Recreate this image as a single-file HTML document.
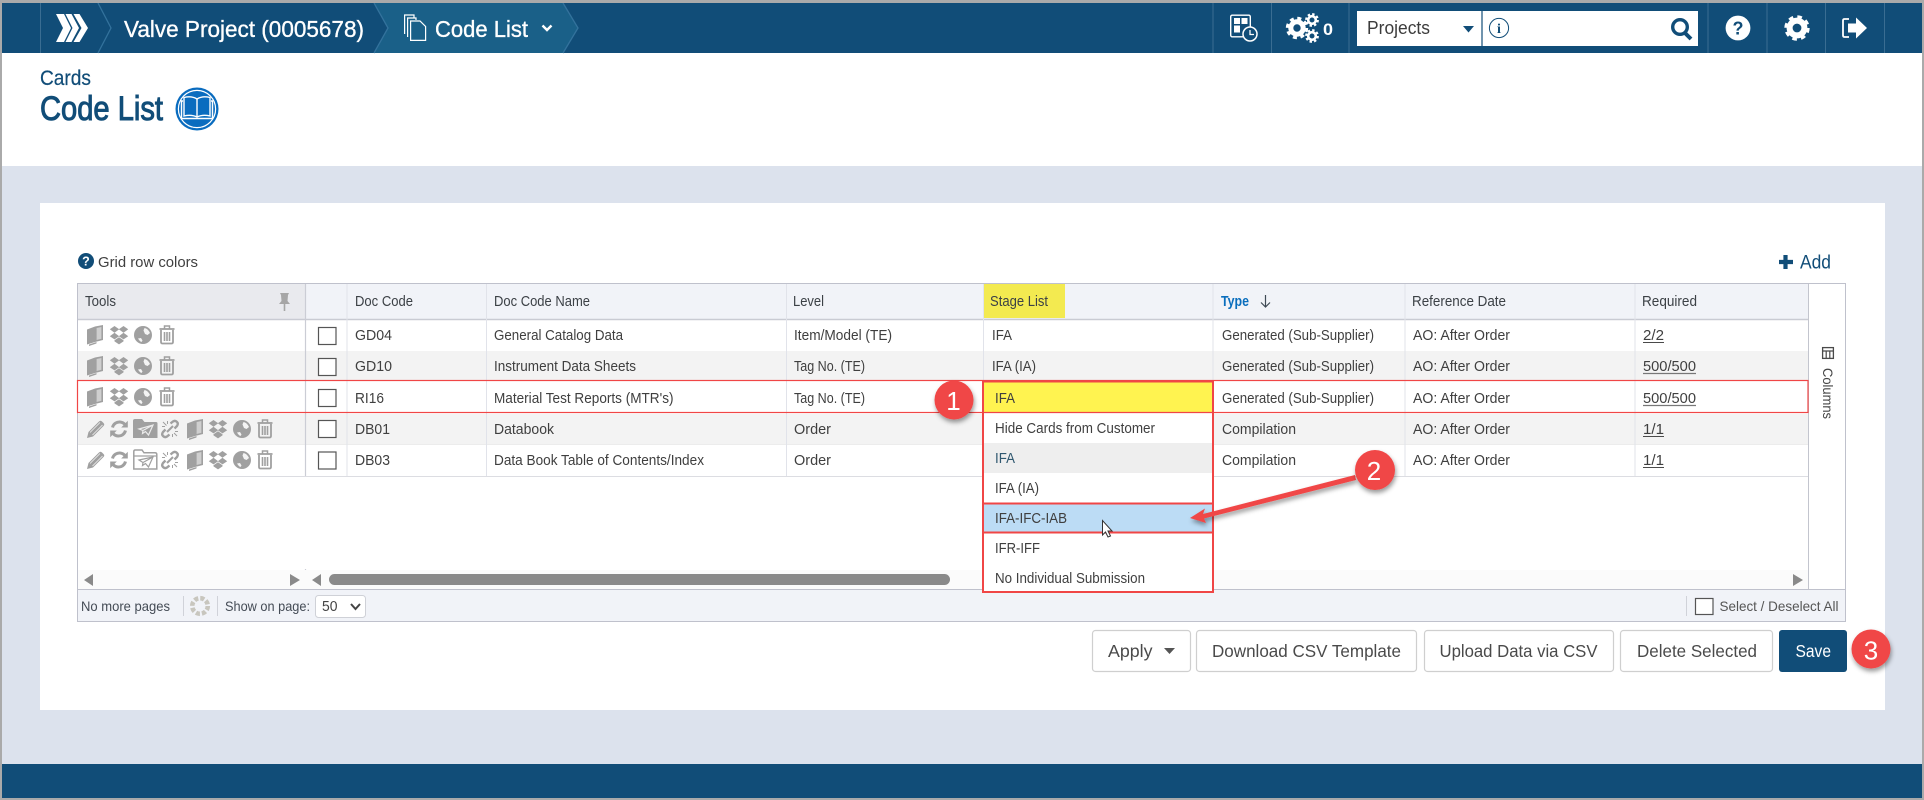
<!DOCTYPE html>
<html lang="en">
<head>
<meta charset="utf-8">
<title>Code List</title>
<style>
html,body{margin:0;padding:0;width:1924px;height:800px;overflow:hidden;background:#dce2ed}
svg{display:block;position:absolute;left:0;top:0}
text{font-family:"Liberation Sans",sans-serif;white-space:pre}
.c{font-size:14.5px;fill:#3f3f3f}
.h{font-size:14.5px;fill:#3c4146}
.w{fill:#fff}
.b{font-size:17.5px;fill:#4a4a4a}
.f{font-size:14px;fill:#444b55}
</style>
</head>
<body>
<svg width="1924" height="800" viewBox="0 0 1924 800" xmlns="http://www.w3.org/2000/svg">
<defs>
  <g id="book"><path d="M0 4.5 L8 1.5 V17 L0 19.5Z" fill="#a0a0a0"/><path d="M8 1.5 L16 0 V15 L8 17Z" fill="#a0a0a0"/><path d="M9.6 3 L14.4 2 V13.7 L9.6 15Z" fill="#cfcfcf"/><path d="M2 19.5 L9.5 17 V18.5 L2 21Z" fill="#a0a0a0"/></g>
  <g id="drop" fill="#a0a0a0"><path d="M4.5 0 L9.2 3.3 L4.5 6.8 L-.2 3.3Z"/><path d="M13.5 0 L18.2 3.3 L13.5 6.8 L8.8 3.3Z"/><path d="M4.5 6.8 L9.2 10.2 L4.5 13.4 L-.2 10.2Z"/><path d="M13.5 6.8 L18.2 10.2 L13.5 13.4 L8.8 10.2Z"/><path d="M4.5 14.2 L9 11.2 L13.5 14.2 V15.4 L9 18.4 L4.5 15.4Z"/></g>
  <g id="globe"><circle cx="9" cy="9" r="9" fill="#a0a0a0"/><path d="M10.5 2 C13 2.5 15 4.5 16 7 L13.5 9 L11 8 L9.5 4.5Z M4 12.5 L7 12 L8.5 14.5 L7.5 16 C6 15.5 5 14 4 12.5Z" fill="#f4f4f4"/></g>
  <g id="trash" fill="none" stroke="#a0a0a0"><path d="M0.5 4 H15.5" stroke-width="1.8"/><path d="M5.5 3.5 V1 H10.5 V3.5" stroke-width="1.5"/><path d="M2 5 V17 C2 18 2.6 18.5 3.5 18.5 H12.5 C13.4 18.5 14 18 14 17 V5" stroke-width="1.8"/><path d="M5.5 7 V16 M8 7 V16 M10.5 7 V16" stroke-width="1.6"/></g>
  <g id="pencil" fill="#a0a0a0"><path d="M0 18 L1.5 12 L12 1.5 C13 .5 14 .5 15 1.5 L16.5 3 C17.5 4 17.5 5 16.5 6 L6 16.5Z"/><path d="M3 12.5 L13 2.5 M5.5 15 L15.5 5" stroke="#fff" stroke-width=".6"/></g>
  <g id="sync" fill="none" stroke="#a0a0a0" stroke-width="3"><path d="M2.5 7.5 C3.5 3.5 7 1.8 10 2 C12.5 2.2 14 3.2 15.5 5"/><path d="M15.5 10.5 C14.5 14.5 11 16.2 8 16 C5.5 15.8 4 14.8 2.5 13"/><path d="M17.8 .8 V7.5 H11.2Z M.2 17.2 V10.5 H6.8Z" fill="#a0a0a0" stroke="none"/></g>
  <g id="link" fill="none" stroke="#a0a0a0"><path d="M9.5 3.5 L12 1.5 C13.5 .5 15 1 16 2 C17 3 17 4.5 16 6 L13.5 8.5" stroke-width="2.4"/><path d="M8.5 14.5 L6 16.5 C4.5 17.5 3 17 2 16 C1 15 1 13.5 2 12 L4.5 9.5" stroke-width="2.4"/><path d="M6 12 L12 6" stroke-width="2"/><path d="M2 2 L5.5 5.5 M1 6.5 H4 M6.5 1 V4 M16 16 L13 13 M17 11.5 H14 M11.5 17 V14" stroke-width="1"/></g>
  <g id="sendfill"><path d="M0 3 C0 1.5 .7 1 2 1 H9 L11.5 4 H23 C24 4 24.5 4.6 24.5 5.5 V20 H0Z" fill="#a0a0a0"/><path d="M6 11 L20 7 L15.5 17 L12.5 13.5 L9.5 15.5 L10 12.5Z M10 12.5 L20 7" fill="none" stroke="#ececec" stroke-width="1.2"/></g>
  <g id="sendline" fill="none" stroke="#a0a0a0"><path d="M.8 20 V2.5 C.8 1.5 1.2 1 2.2 1 H9 L11 3.8 H22 C23.3 3.8 23.8 4.4 23.8 5.5 V20Z" stroke-width="1.5"/><path d="M.8 7 H23.8" stroke-width="1.2"/><path d="M6 11 L20 8 L15.5 18 L12.5 14.5 L9.5 16.5 L10 13.5Z M10 13.5 L20 8" stroke-width="1.2"/></g>
  <g id="tools3"><use href="#book" x="87" y="-10"/><use href="#drop" x="110" y="-9"/><use href="#globe" x="134" y="-9"/><use href="#trash" x="159" y="-10"/></g>
  <g id="toolsEnd"><use href="#pencil" x="87" y="-9"/><use href="#sync" x="110" y="-9"/><use href="#link" x="161" y="-9"/><use href="#book" x="187" y="-10"/><use href="#drop" x="209" y="-9"/><use href="#globe" x="233" y="-9"/><use href="#trash" x="257" y="-10"/></g>
  <rect id="cb" width="17.5" height="17" fill="#fff" stroke="#555" stroke-width="1.2"/>
  <filter id="sh" x="-40%" y="-40%" width="180%" height="180%"><feDropShadow dx="1" dy="3" stdDeviation="2.5" flood-color="#000" flood-opacity=".4"/></filter>
</defs>

<!-- frame -->
<rect width="1924" height="800" fill="#dce2ed"/>
<rect x="2" y="53" width="1920" height="113" fill="#fff"/>

<!-- navbar -->
<rect x="2" y="3" width="1920" height="50" fill="#114d78"/>
<path d="M374 3 H563 L578 28 L563 53 H374 L388 28Z" fill="#1a6088"/>
<path d="M40.5 3 V53" stroke="#3a6d92"/>
<path d="M98 3 L111 28 L98 53 M374 3 L388 28 L374 53 M563 3 L578 28 L563 53" fill="none" stroke="#33729c" stroke-width="1.3"/>
<g fill="#fff"><path d="M56 14 H64 L71 28 L64 42 H56 L63 28Z"/><path d="M65.5 14 H71.5 L79 28 L71.5 42 H65.5 L72.5 28Z"/><path d="M73.5 14 H79.5 L88 28 L79.5 42 H73.5 L81.5 28Z"/></g>
<text x="124" y="37" font-size="23.5" class="w" stroke="#fff" stroke-width=".35" textLength="240" lengthAdjust="spacingAndGlyphs">Valve Project (0005678)</text>
<g fill="none" stroke="#fff" stroke-width="1.2"><path d="M404.6 34 V15 H414 V18"/><path d="M407.6 37 V18 H416 V20"/><path d="M410.6 40.4 V21 H420 L425.6 26.5 V40.4Z"/></g>
<text x="435" y="37" font-size="23.5" class="w" stroke="#fff" stroke-width=".35" textLength="93" lengthAdjust="spacingAndGlyphs">Code List</text>
<path d="M542.5 25.5 L547 30 L551.5 25.5" fill="none" stroke="#fff" stroke-width="2.4"/>

<path d="M1213 3 V53 M1271.5 3 V53 M1349 3 V53 M1708 3 V53 M1767 3 V53 M1825.5 3 V53 M1884.5 3 V53" stroke="#3a6d92"/>
<!-- schedule icon -->
<g fill="none" stroke="#fff"><rect x="1230.7" y="15.2" width="19.6" height="21.6" rx="1.5" stroke-width="1.4"/></g>
<g fill="#fff"><rect x="1234" y="18" width="6" height="6"/><rect x="1241.5" y="18" width="6" height="6"/><rect x="1234" y="25.5" width="6" height="7"/></g>
<circle cx="1250" cy="34" r="7" fill="#114d78" stroke="#fff" stroke-width="1.5"/>
<path d="M1250 30 V34.5 H1254" fill="none" stroke="#fff" stroke-width="1.3"/>
<!-- gears -->
<g fill="none" stroke="#fff">
  <circle cx="1297" cy="28" r="6.2" stroke-width="5"/><circle cx="1297" cy="28" r="9.7" stroke-width="3" stroke-dasharray="4 3.62"/>
  <circle cx="1312" cy="20" r="3.8" stroke-width="2.6"/><circle cx="1312" cy="20" r="5.8" stroke-width="2.2" stroke-dasharray="2.4 2.15"/>
  <circle cx="1312" cy="36" r="3.8" stroke-width="2.6"/><circle cx="1312" cy="36" r="5.8" stroke-width="2.2" stroke-dasharray="2.4 2.15"/>
</g>
<text x="1323" y="35" font-size="17" font-weight="bold" class="w" textLength="10" lengthAdjust="spacingAndGlyphs">0</text>
<!-- search box -->
<rect x="1357" y="11" width="341" height="35" fill="#fff"/>
<path d="M1482 11 V46" stroke="#114d78" stroke-width="1.2"/>
<text x="1367" y="34" font-size="18" fill="#3c3c3c" textLength="63" lengthAdjust="spacingAndGlyphs">Projects</text>
<path d="M1463 26 H1474 L1468.5 32.5Z" fill="#114d78"/>
<circle cx="1499" cy="28" r="9.6" fill="none" stroke="#114d78" stroke-width="1"/>
<text x="1499" y="33" font-size="14" font-weight="bold" text-anchor="middle" fill="#114d78" style="font-family:'Liberation Serif',serif">i</text>
<circle cx="1680" cy="27" r="7.3" fill="none" stroke="#114d78" stroke-width="3.4"/>
<path d="M1685 33 L1691 39" stroke="#114d78" stroke-width="4"/>
<!-- help / gear / signout -->
<circle cx="1738" cy="28" r="12.4" fill="#fff"/>
<text x="1738" y="34.5" font-size="18" font-weight="bold" text-anchor="middle" fill="#114d78">?</text>
<g fill="none" stroke="#fff"><circle cx="1797" cy="28" r="7.4" stroke-width="6"/><circle cx="1797" cy="28" r="11.2" stroke-width="3" stroke-dasharray="4.6 4.2"/></g>
<path d="M1849 19 H1844.5 C1843.4 19 1843 19.6 1843 20.6 V35.4 C1843 36.4 1843.4 37 1844.5 37 H1849" fill="none" stroke="#fff" stroke-width="1.8"/>
<path d="M1848 23.5 H1856 V17.5 L1867 28 L1856 38.5 V32.5 H1848Z" fill="#fff"/>

<!-- header -->
<text x="40" y="85" font-size="21" fill="#114d78" stroke="#114d78" stroke-width=".2" textLength="51" lengthAdjust="spacingAndGlyphs">Cards</text>
<text x="40" y="120" font-size="34" fill="#114d78" stroke="#114d78" stroke-width="1" textLength="123" lengthAdjust="spacingAndGlyphs">Code List</text>
<circle cx="197" cy="109" r="21.5" fill="#0a6cbf"/>
<circle cx="197" cy="109" r="18.6" fill="none" stroke="#fff" stroke-width="1.2"/>
<g fill="none" stroke="#fff" stroke-width="1.4"><path d="M197 99 C193 96.5 188 96.5 184 97.5 V116 C188 115 193 115 197 117 C201 115 206 115 210 116 V97.5 C206 96.5 201 96.5 197 99Z"/><path d="M197 99 V117"/><path d="M183 101 H181.5 V118.5 H212.5 V101 H211"/></g>

<!-- card -->
<rect x="40" y="203" width="1845" height="507" fill="#fff"/>
<circle cx="86" cy="261" r="8" fill="#114d78"/>
<text x="86" y="265.5" font-size="12.5" font-weight="bold" text-anchor="middle" class="w">?</text>
<text x="98" y="267" font-size="15" fill="#3f3f3f" textLength="100" lengthAdjust="spacingAndGlyphs">Grid row colors</text>
<path d="M1785.5 255 V269 M1779 262 H1793" stroke="#114d78" stroke-width="4.2"/>
<text x="1800" y="268.5" font-size="19" fill="#114d78" textLength="31" lengthAdjust="spacingAndGlyphs">Add</text>

<!-- grid -->
<rect x="77.5" y="283.5" width="1768" height="338" fill="#fff" stroke="#bfc1cc"/>
<rect x="78" y="284" width="1730" height="35" fill="#f1f3f8"/>
<rect x="78" y="284" width="228" height="35" fill="#e9eaee"/>
<rect x="78" y="351" width="1730" height="29" fill="#f3f3f3"/>
<rect x="78" y="414" width="1730" height="30" fill="#f3f3f3"/>
<path d="M78 319.5 H1808" stroke="#c9cbd3" stroke-width="1.4"/>
<path d="M78 476.5 H1808" stroke="#dcdde2"/>
<path d="M78 444.5 H1808" stroke="#ececec"/>
<path d="M305.5 284 V476 M305.5 569 V589" stroke="#cbcdd5" stroke-width="1.2"/>
<path d="M347 284 V476 M486.5 284 V476 M786.5 284 V476 M983.5 284 V476 M1213 284 V476 M1405 284 V476 M1635 284 V476" stroke="#e1e3ea"/>
<path d="M1808.5 284 V589" stroke="#c3c5ce"/>
<rect x="78" y="570" width="1730" height="19" fill="#fbfbfb"/>
<rect x="78" y="590" width="1767" height="31" fill="#f1f3f8"/>
<path d="M78 589.5 H1846" stroke="#bfc1cc"/>

<!-- header row -->
<text x="85" y="306" class="h" textLength="31" lengthAdjust="spacingAndGlyphs">Tools</text>
<path d="M280 293 H289 L288 295 L287.5 301 L290 304 H285.3 V311 H283.7 V304 H279 L281.5 301 L281 295Z" fill="#a6a6a6"/>
<text x="355" y="306" class="h" textLength="58" lengthAdjust="spacingAndGlyphs">Doc Code</text>
<text x="494" y="306" class="h" textLength="96" lengthAdjust="spacingAndGlyphs">Doc Code Name</text>
<text x="793" y="306" class="h" textLength="31" lengthAdjust="spacingAndGlyphs">Level</text>
<rect x="984" y="284" width="81" height="34" fill="#f3ea50"/>
<text x="990" y="306" class="h" textLength="58" lengthAdjust="spacingAndGlyphs">Stage List</text>
<text x="1221" y="306" font-size="14.5" font-weight="bold" fill="#0a6ebd" textLength="28" lengthAdjust="spacingAndGlyphs">Type</text>
<path d="M1265.5 295 V307 M1261 302.5 L1265.5 307 L1270 302.5" fill="none" stroke="#3f4a55" stroke-width="1.2"/>
<text x="1412" y="306" class="h" textLength="94" lengthAdjust="spacingAndGlyphs">Reference Date</text>
<text x="1642" y="306" class="h" textLength="55" lengthAdjust="spacingAndGlyphs">Required</text>

<!-- tool icons -->
<use href="#tools3" y="335"/><use href="#tools3" y="366"/><use href="#tools3" y="397"/>
<use href="#toolsEnd" y="429"/><use href="#toolsEnd" y="460"/>
<use href="#sendfill" x="133" y="418"/><use href="#sendline" x="133" y="449"/>

<!-- checkboxes -->
<use href="#cb" x="318.5" y="327.5"/><use href="#cb" x="318.5" y="358.5"/><use href="#cb" x="318.5" y="389.5"/><use href="#cb" x="318.5" y="420.5"/><use href="#cb" x="318.5" y="452"/>

<!-- rows -->
<text x="355" y="340" class="c" textLength="37" lengthAdjust="spacingAndGlyphs">GD04</text>
<text x="355" y="371" class="c" textLength="37" lengthAdjust="spacingAndGlyphs">GD10</text>
<text x="355" y="403" class="c" textLength="29" lengthAdjust="spacingAndGlyphs">RI16</text>
<text x="355" y="434" class="c" textLength="35" lengthAdjust="spacingAndGlyphs">DB01</text>
<text x="355" y="465" class="c" textLength="35" lengthAdjust="spacingAndGlyphs">DB03</text>

<text x="494" y="340" class="c" textLength="129" lengthAdjust="spacingAndGlyphs">General Catalog Data</text>
<text x="494" y="371" class="c" textLength="142" lengthAdjust="spacingAndGlyphs">Instrument Data Sheets</text>
<text x="494" y="403" class="c" textLength="179.5" lengthAdjust="spacingAndGlyphs">Material Test Reports (MTR's)</text>
<text x="494" y="434" class="c" textLength="60" lengthAdjust="spacingAndGlyphs">Databook</text>
<text x="494" y="465" class="c" textLength="210" lengthAdjust="spacingAndGlyphs">Data Book Table of Contents/Index</text>

<text x="794" y="340" class="c" textLength="98" lengthAdjust="spacingAndGlyphs">Item/Model (TE)</text>
<text x="794" y="371" class="c" textLength="71" lengthAdjust="spacingAndGlyphs">Tag No. (TE)</text>
<text x="794" y="403" class="c" textLength="71" lengthAdjust="spacingAndGlyphs">Tag No. (TE)</text>
<text x="794" y="434" class="c" textLength="37" lengthAdjust="spacingAndGlyphs">Order</text>
<text x="794" y="465" class="c" textLength="37" lengthAdjust="spacingAndGlyphs">Order</text>

<text x="992" y="340" class="c" textLength="20" lengthAdjust="spacingAndGlyphs">IFA</text>
<text x="992" y="371" class="c" textLength="44" lengthAdjust="spacingAndGlyphs">IFA (IA)</text>

<text x="1222" y="340" class="c" textLength="152" lengthAdjust="spacingAndGlyphs">Generated (Sub-Supplier)</text>
<text x="1222" y="371" class="c" textLength="152" lengthAdjust="spacingAndGlyphs">Generated (Sub-Supplier)</text>
<text x="1222" y="403" class="c" textLength="152" lengthAdjust="spacingAndGlyphs">Generated (Sub-Supplier)</text>
<text x="1222" y="434" class="c" textLength="74" lengthAdjust="spacingAndGlyphs">Compilation</text>
<text x="1222" y="465" class="c" textLength="74" lengthAdjust="spacingAndGlyphs">Compilation</text>

<text x="1413" y="340" class="c" textLength="97" lengthAdjust="spacingAndGlyphs">AO: After Order</text>
<text x="1413" y="371" class="c" textLength="97" lengthAdjust="spacingAndGlyphs">AO: After Order</text>
<text x="1413" y="403" class="c" textLength="97" lengthAdjust="spacingAndGlyphs">AO: After Order</text>
<text x="1413" y="434" class="c" textLength="97" lengthAdjust="spacingAndGlyphs">AO: After Order</text>
<text x="1413" y="465" class="c" textLength="97" lengthAdjust="spacingAndGlyphs">AO: After Order</text>

<text x="1643" y="340" class="c" textLength="21" lengthAdjust="spacingAndGlyphs">2/2</text>
<text x="1643" y="371" class="c" textLength="53" lengthAdjust="spacingAndGlyphs">500/500</text>
<text x="1643" y="403" class="c" textLength="53" lengthAdjust="spacingAndGlyphs">500/500</text>
<text x="1643" y="434" class="c" textLength="21" lengthAdjust="spacingAndGlyphs">1/1</text>
<text x="1643" y="465" class="c" textLength="21" lengthAdjust="spacingAndGlyphs">1/1</text>
<path d="M1643 342.5 H1664 M1643 436.5 H1664 M1643 467.5 H1664" stroke="#4a4a4a"/>
<path d="M1643 373.5 H1696 M1643 405.5 H1696" stroke="#777" stroke-width="1.3"/>

<!-- columns -->
<g fill="none" stroke="#4a4a4a"><rect x="1822.6" y="347.6" width="10.8" height="10.8" stroke-width="1.3"/><path d="M1822.6 351 H1833.4 M1826.2 351 V358 M1829.8 351 V358" stroke-width="1.2"/></g>
<text transform="translate(1823 368) rotate(90)" font-size="13.5" fill="#444" textLength="51" lengthAdjust="spacingAndGlyphs">Columns</text>

<!-- scroll -->
<path d="M93 574 V586 L84 580Z M290 574 V586 L300 580Z M321 574 V586 L312 580Z M1793 574 V586 L1803 580Z" fill="#8a8a8a"/>
<rect x="329" y="574" width="621" height="11" rx="5.5" fill="#8a8a8a"/>

<!-- footer -->
<text x="81" y="611" class="f" textLength="89" lengthAdjust="spacingAndGlyphs">No more pages</text>
<path d="M183.5 596 V616 M217.5 596 V616 M1686.5 596 V616" stroke="#d0d2d9"/>
<circle cx="200" cy="606" r="7.8" fill="none" stroke="#c8c6be" stroke-width="4.6" stroke-dasharray="4.1 2.03"/>
<text x="225" y="611" class="f" textLength="85" lengthAdjust="spacingAndGlyphs">Show on page:</text>
<rect x="315.5" y="595.5" width="50" height="22" rx="3" fill="#fff" stroke="#cfd1d7"/>
<text x="322" y="611" font-size="14.5" fill="#444" textLength="15.5" lengthAdjust="spacingAndGlyphs">50</text>
<path d="M351 604 L355.5 609 L360 604" fill="none" stroke="#444" stroke-width="2"/>
<rect x="1695.5" y="598.5" width="17.5" height="16" fill="#fff" stroke="#555" stroke-width="1.2"/>
<text x="1719.5" y="611" font-size="14" fill="#555" textLength="119" lengthAdjust="spacingAndGlyphs">Select / Deselect All</text>

<!-- buttons -->
<g fill="#fff" stroke="#cfcfcf" stroke-width="1.2">
  <rect x="1092.5" y="630.5" width="98" height="41" rx="3"/>
  <rect x="1196.5" y="630.5" width="220" height="41" rx="3"/>
  <rect x="1424.5" y="630.5" width="189" height="41" rx="3"/>
  <rect x="1620.5" y="630.5" width="152" height="41" rx="3"/>
</g>
<rect x="1779" y="630" width="68" height="42" rx="3" fill="#114d78"/>
<text x="1108" y="657" class="b" textLength="44.5" lengthAdjust="spacingAndGlyphs">Apply</text>
<path d="M1164 648 H1175 L1169.5 654Z" fill="#555"/>
<text x="1212" y="657" class="b" textLength="189" lengthAdjust="spacingAndGlyphs">Download CSV Template</text>
<text x="1439.5" y="657" class="b" textLength="158" lengthAdjust="spacingAndGlyphs">Upload Data via CSV</text>
<text x="1637" y="657" class="b" textLength="120" lengthAdjust="spacingAndGlyphs">Delete Selected</text>
<text x="1795.5" y="657" font-size="17.5" class="w" textLength="35.5" lengthAdjust="spacingAndGlyphs">Save</text>

<!-- row red outline -->
<rect x="77.5" y="380.5" width="1730.5" height="32" fill="none" stroke="#f04646" stroke-width="1.2"/>

<!-- dropdown -->
<rect x="983" y="382" width="230" height="210" fill="#fff"/>
<rect x="984" y="382" width="228" height="30" fill="#fff350"/>
<rect x="984" y="443" width="228" height="30" fill="#eeeeee"/>
<rect x="984" y="504" width="228" height="28" fill="#bcdcf5"/>
<path d="M983 412.5 H1213" stroke="#f04646" stroke-width="1.2"/>
<path d="M983 503.5 H1213 M983 532.5 H1213" stroke="#f04646" stroke-width="2"/>
<rect x="983" y="381.5" width="230" height="210.5" fill="none" stroke="#f04646" stroke-width="2"/>
<text x="995" y="403" class="c" textLength="20" lengthAdjust="spacingAndGlyphs">IFA</text>
<text x="995" y="433" class="c" textLength="160" lengthAdjust="spacingAndGlyphs">Hide Cards from Customer</text>
<text x="995" y="463" font-size="14.5" fill="#305870" textLength="20" lengthAdjust="spacingAndGlyphs">IFA</text>
<text x="995" y="493" class="c" textLength="44" lengthAdjust="spacingAndGlyphs">IFA (IA)</text>
<text x="995" y="523" class="c" textLength="72" lengthAdjust="spacingAndGlyphs">IFA-IFC-IAB</text>
<text x="995" y="553" class="c" textLength="45" lengthAdjust="spacingAndGlyphs">IFR-IFF</text>
<text x="995" y="583" class="c" textLength="150" lengthAdjust="spacingAndGlyphs">No Individual Submission</text>
<path d="M1102.5 520.5 V535 L1105.5 532 L1108 537 L1110.5 536 L1108 531 L1112 531Z" fill="#fff" stroke="#333" stroke-width="1"/>

<!-- arrow and badges -->
<g filter="url(#sh)">
  <path d="M1355 475 L1203 514 L1205 508.5 L1190 518 L1206 523 L1204 518.5 L1356 480Z" fill="#f04646"/>
</g>
<g filter="url(#sh)">
  <circle cx="954" cy="400" r="19.5" fill="#f04646"/>
  <circle cx="1375" cy="470" r="20" fill="#f04646"/>
  <circle cx="1871" cy="649" r="19.5" fill="#f04646"/>
</g>
<g font-size="26" text-anchor="middle" class="w">
  <text x="953.5" y="410" fill="#fff">1</text>
  <text x="1374" y="480" fill="#fff">2</text>
  <text x="1871" y="659.5" fill="#fff">3</text>
</g>

<!-- bottom bar & frame -->
<rect x="2" y="764" width="1920" height="34" fill="#114d78"/>
<path d="M0 1.5 H1924" stroke="#aaa" stroke-width="3"/>
<path d="M0 799 H1924" stroke="#aaa" stroke-width="2"/>
<path d="M1 0 V800" stroke="#aaa" stroke-width="2"/>
<path d="M1923 0 V800" stroke="#aaa" stroke-width="2"/>
</svg>
</body>
</html>
